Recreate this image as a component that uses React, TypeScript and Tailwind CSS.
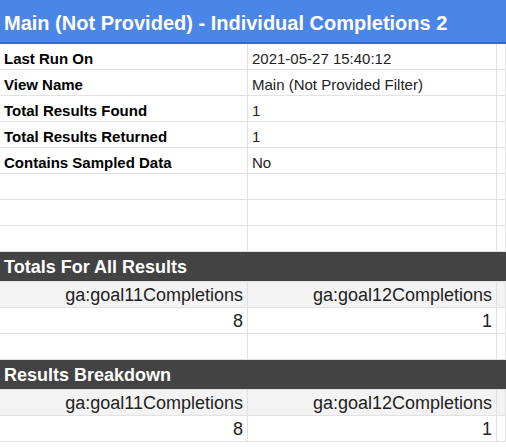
const font = "font-['Liberation_Sans',Arial,sans-serif]";

const info = [
  ["Last Run On", "2021-05-27 15:40:12"],
  ["View Name", "Main (Not Provided Filter)"],
  ["Total Results Found", "1"],
  ["Total Results Returned", "1"],
  ["Contains Sampled Data", "No"],
  ["", ""],
  ["", ""],
  ["", ""],
];

function Row({ a, b, bold, right, gray }: { a: string; b: string; bold?: boolean; right?: boolean; gray?: boolean }) {
  const cell = `h-[26px] border-b border-r border-[#e2e2e2] px-[4px] pb-[3px] flex items-end leading-none whitespace-nowrap overflow-hidden ${gray ? "bg-[#f3f3f3]" : ""}`;
  const size = right ? "text-[18px]" : "text-[15px]";
  return (
    <div className="flex">
      <div className={`${cell} w-[250px] ${right ? "justify-end" : ""} ${bold ? "font-bold text-black text-[15px]" : `text-[#222] ${size}`}`}>{a}</div>
      <div className={`${cell} w-[251px] ${right ? "justify-end" : ""} text-[#222] ${size}`}>{b}</div>
      <div className={`${cell} flex-1`}></div>
    </div>
  );
}

function Band({ title }: { title: string }) {
  return (
    <div className="h-[30px] bg-[#434343] border-b border-[#e2e2e2] px-[4px] pb-[5px] flex items-end text-white font-bold text-[18px] leading-none">
      {title}
    </div>
  );
}

export default function App() {
  return (
    <div className={`w-[506px] h-[447px] overflow-hidden bg-white ${font}`}>
      <div className="h-[44px] bg-[#4a86e8] border-b-2 border-[#1c6fe6] px-[4px] pb-[9px] flex items-end text-white font-bold text-[20px] leading-none whitespace-nowrap">
        Main (Not Provided) - Individual Completions 2
      </div>
      {info.map(([a, b], i) => (
        <Row key={i} a={a} b={b} bold />
      ))}
      <Band title="Totals For All Results" />
      <Row a="ga:goal11Completions" b="ga:goal12Completions" right gray />
      <Row a="8" b="1" right />
      <Row a="" b="" />
      <Band title="Results Breakdown" />
      <Row a="ga:goal11Completions" b="ga:goal12Completions" right gray />
      <Row a="8" b="1" right />
    </div>
  );
}
